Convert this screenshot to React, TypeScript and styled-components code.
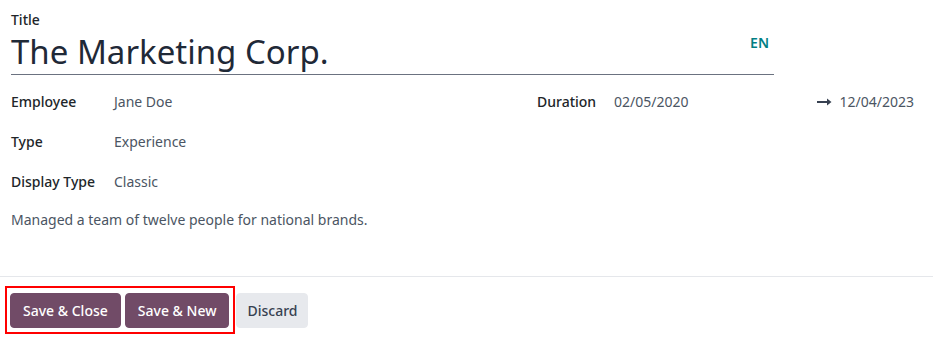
import React from "react";
import styled, { createGlobalStyle } from "styled-components";

const Global = createGlobalStyle`
  html, body { margin: 0; padding: 0; background: #fff; }
  body { font-family: "Noto Sans", "Open Sans", sans-serif; color: #374151; font-size: 14px; }
`;

const Page = styled.div`
  width: 933px;
  height: 341px;
  display: flex;
  flex-direction: column;
  overflow: hidden;
`;

const Sheet = styled.div`
  padding: 10px 19px 0 11px;
  display: flex;
  flex-direction: column;
  height: 266px;
  border-bottom: 1px solid #e5e7eb;
`;

const FieldLabel = styled.div`
  font-size: 14px;
  font-weight: 500;
  color: #212529;
  line-height: 20px;
`;

const TitleRow = styled.div`
  width: 763px;
  display: flex;
  align-items: flex-end;
  justify-content: space-between;
  border-bottom: 1px solid #6b7280;
  height: 44px;
`;

const TitleText = styled.div`
  font-size: 33px;
  line-height: 44px;
  color: #1f2937;
  font-weight: 400;
`;

const Lang = styled.span`
  align-self: flex-start;
  margin-top: 3px;
  margin-right: 5px;
  color: #017e84;
  font-weight: 600;
  font-size: 14px;
`;

const Grid = styled.div`
  margin-top: 16px;
  display: grid;
  grid-template-columns: 526px 1fr;
`;

const Col = styled.div`
  display: flex;
  flex-direction: column;
  gap: 19px;
`;

const Row = styled.div`
  display: flex;
  align-items: center;
  height: 21px;
`;

const Label = styled.div<{ $w: number }>`
  width: ${(p) => p.$w}px;
  flex: none;
  font-weight: 500;
  color: #212529;
`;

const Value = styled.div`
  color: #4b5563;
`;

const DateRange = styled.div`
  flex: 1;
  display: flex;
  align-items: center;
  justify-content: space-between;
  color: #4b5563;
`;

const End = styled.span`
  display: flex;
  align-items: center;
  gap: 8px;
`;

const Desc = styled.div`
  margin-top: 18px;
  color: #4b5563;
`;

const Footer = styled.div`
  padding: 9px 5px 0;
  display: flex;
  align-items: center;
  gap: 1px;
`;

const Highlight = styled.div`
  border: 2px solid #ff0000;
  padding: 5px 4px 4px 3px;
  display: flex;
  gap: 4px;
`;

const Btn = styled.button<{ $primary?: boolean }>`
  font-family: inherit;
  font-size: 14px;
  font-weight: 500;
  height: 35px;
  padding: 0 ${(p) => (p.$primary ? 12 : 10)}px;
  border-radius: 4px;
  border: 1px solid ${(p) => (p.$primary ? "#714b67" : "#e7e9ed")};
  background: ${(p) => (p.$primary ? "#714b67" : "#e7e9ed")};
  color: ${(p) => (p.$primary ? "#ffffff" : "#374151")};
  cursor: pointer;
`;

export default function App() {
  return (
    <Page>
      <Global />
      <Sheet>
        <FieldLabel>Title</FieldLabel>
        <TitleRow>
          <TitleText>The Marketing Corp.</TitleText>
          <Lang>EN</Lang>
        </TitleRow>
        <Grid>
          <Col>
            <Row>
              <Label $w={103}>Employee</Label>
              <Value>Jane Doe</Value>
            </Row>
            <Row>
              <Label $w={103}>Type</Label>
              <Value>Experience</Value>
            </Row>
            <Row>
              <Label $w={103}>Display Type</Label>
              <Value>Classic</Value>
            </Row>
          </Col>
          <Col>
            <Row>
              <Label $w={77}>Duration</Label>
              <DateRange>
                <span>02/05/2020</span>
                <End>
                  <svg width="15" height="10" viewBox="0 0 15 10">
                    <path d="M0 5h11" stroke="#374151" strokeWidth="2" />
                    <path d="M10 1.5L14.5 5L10 8.5z" fill="#374151" />
                  </svg>
                  12/04/2023
                </End>
              </DateRange>
            </Row>
          </Col>
        </Grid>
        <Desc>Managed a team of twelve people for national brands.</Desc>
      </Sheet>
      <Footer>
        <Highlight>
          <Btn $primary>Save &amp; Close</Btn>
          <Btn $primary>Save &amp; New</Btn>
        </Highlight>
        <Btn>Discard</Btn>
      </Footer>
    </Page>
  );
}
